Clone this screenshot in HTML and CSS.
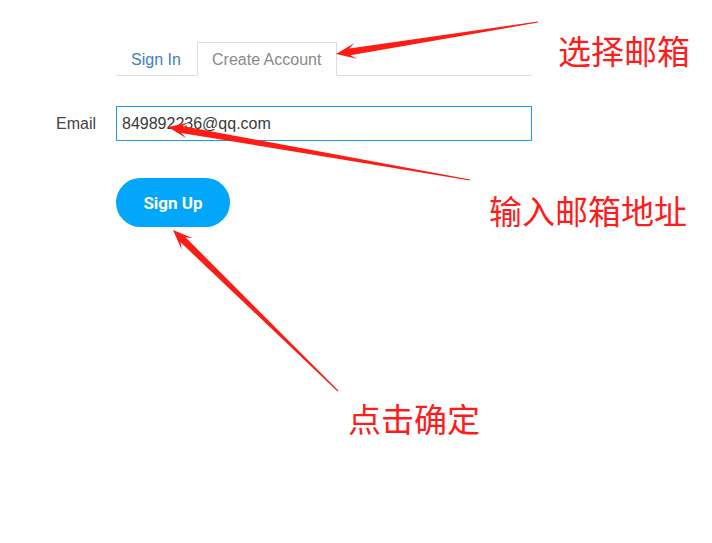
FILE: index.html
```html
<!DOCTYPE html>
<html lang="zh-CN">
<head>
<meta charset="utf-8">
<title>Create Account</title>
<link rel="stylesheet" href="styles.css">
</head>
<body>
<div class="page">
  <div class="form">
    <div class="row row-tabs">
      <div class="label-col"></div>
      <div class="tabs">
        <div class="tab tab-signin">Sign In</div>
        <div class="tab tab-active">Create Account</div>
      </div>
    </div>
    <div class="row row-email">
      <label class="label-col label" for="email">Email</label>
      <div class="input">849892236@qq.com</div>
    </div>
    <div class="row row-actions">
      <div class="label-col"></div>
      <button class="btn">Sign Up</button>
    </div>
  </div>

  <svg class="arrows" width="712" height="543" viewBox="0 0 712 543" aria-hidden="true">
    <polygon fill="#ff1c14" points="336,54 357.0,58.8 350.4,55.3 538.1,22.6 537.9,21.4 349.3,48.4 354.5,43.0"/>
    <polygon fill="#ff1c14" points="168,127 186.3,138.3 181.2,132.9 469.9,180.6 470.1,179.4 182.4,126.0 189.1,122.6"/>
    <polygon fill="#ff1c14" points="173,230 181.7,249.7 180.6,242.3 337.6,391.4 338.4,390.6 185.5,237.3 192.9,238.2"/>
  </svg>
  <div class="note note-1">选择邮箱</div>
  <div class="note note-2">输入邮箱地址</div>
  <div class="note note-3">点击确定</div>
</div>
</body>
</html>
```
FILE: styles.css
```css
html, body {
  margin: 0;
  padding: 0;
  background: #ffffff;
}
.page {
  position: relative;
  width: 712px;
  height: 543px;
  overflow: hidden;
  font-family: "Liberation Sans", Arial, sans-serif;
}
.form {
  display: flex;
  flex-direction: column;
  padding-top: 42px;
}
.row {
  display: flex;
  align-items: center;
}
.label-col {
  width: 116px;
  flex: none;
  box-sizing: border-box;
}
.row-tabs {
  align-items: stretch;
}
.tabs {
  width: 416px;
  display: flex;
  align-items: stretch;
  border-bottom: 1px solid #dddddd;
  box-sizing: border-box;
  height: 34px;
}
.tab {
  font-size: 16px;
  line-height: 33px;
  padding: 1px 15px 0;
  box-sizing: border-box;
}
.tab-signin {
  color: #3d80c4;
  width: 81px;
}
.tab-active {
  color: #8a8a8a;
  border: 1px solid #dddddd;
  border-bottom: 1px solid #ffffff;
  margin-bottom: -1px;
  background: #ffffff;
  width: 140px;
  padding: 0 14px;
  line-height: 33px;
}
.row-email {
  margin-top: 30px;
}
.label {
  text-align: right;
  padding-right: 20px;
  font-size: 16px;
  color: #444444;
  line-height: 35px;
  height: 35px;
}
.input {
  width: 416px;
  height: 35px;
  box-sizing: border-box;
  border: 1px solid #1f9fe3;
  padding: 0 5px;
  font-size: 16px;
  line-height: 33px;
  color: #3a3a3a;
}
.row-actions {
  margin-top: 37px;
}
.btn {
  width: 114px;
  height: 49px;
  border: none;
  border-radius: 25px;
  background: #02a6fb;
  color: #ffffff;
  font-family: Roboto, "Liberation Sans", sans-serif;
  font-weight: 700;
  font-size: 17px;
  padding: 0;
}
.arrows {
  position: absolute;
  left: 0;
  top: 0;
  pointer-events: none;
}
.note {
  position: absolute;
  font-family: "Noto Sans CJK SC", "Noto Sans", sans-serif;
  font-size: 33px;
  line-height: 33px;
  color: #ff1c1c;
  font-weight: 400;
  white-space: nowrap;
}
.note-1 { left: 558px; top: 34px; }
.note-2 { left: 489px; top: 194px; }
.note-3 { left: 348px; top: 402px; }
```
